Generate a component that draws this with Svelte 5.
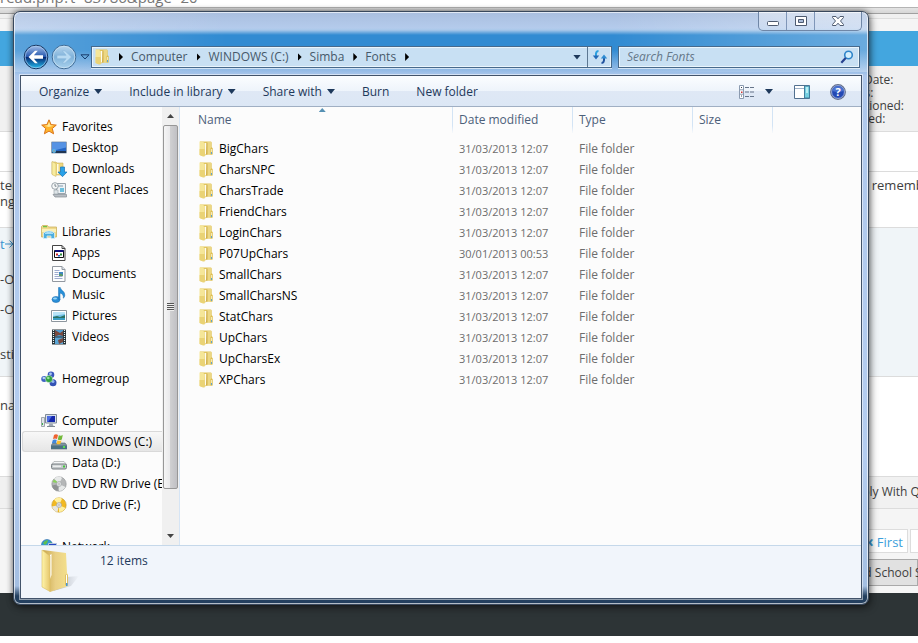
<script>
  const crumbs = ['Computer', 'WINDOWS (C:)', 'Simba', 'Fonts']

  const commands = [
    { label: 'Organize', menu: true },
    { label: 'Include in library', menu: true },
    { label: 'Share with', menu: true },
    { label: 'Burn', menu: false },
    { label: 'New folder', menu: false }
  ]

  const groups = [
    {
      label: 'Favorites',
      icon: 'star',
      items: [
        { label: 'Desktop', icon: 'desktop' },
        { label: 'Downloads', icon: 'downloads' },
        { label: 'Recent Places', icon: 'recent' }
      ]
    },
    {
      label: 'Libraries',
      icon: 'libraries',
      items: [
        { label: 'Apps', icon: 'apps' },
        { label: 'Documents', icon: 'documents' },
        { label: 'Music', icon: 'music' },
        { label: 'Pictures', icon: 'pictures' },
        { label: 'Videos', icon: 'videos' }
      ]
    },
    { label: 'Homegroup', icon: 'homegroup', items: [] },
    {
      label: 'Computer',
      icon: 'computer',
      items: [
        { label: 'WINDOWS (C:)', icon: 'windrive' },
        { label: 'Data (D:)', icon: 'drive' },
        { label: 'DVD RW Drive (E:)', icon: 'dvd' },
        { label: 'CD Drive (F:)', icon: 'cd' }
      ]
    },
    { label: 'Network', icon: 'network', items: [] }
  ]

  const columns = ['Name', 'Date modified', 'Type', 'Size']

  const names = [
    'BigChars', 'CharsNPC', 'CharsTrade', 'FriendChars', 'LoginChars', 'P07UpChars',
    'SmallChars', 'SmallCharsNS', 'StatChars', 'UpChars', 'UpCharsEx', 'XPChars'
  ]
  const files = names.map((name) => ({
    name,
    modified: name === 'P07UpChars' ? '30/01/2013 00:53' : '31/03/2013 12:07',
    type: 'File folder'
  }))

  let selected = $state('WINDOWS (C:)')
  let query = $state('')
</script>

{#snippet icon(name)}
  <svg class="icon" viewBox="0 0 16 16" aria-hidden="true">
    {#if name === 'folder'}
      <path d="M2 .5h11l.7.7v4.800l.8 1v6.500H9L5 15.500 2 14z" fill="#e2c65f" />
      <path d="M9 1h4v12.500H8z" fill="#ecd783" />
      <path d="M6.500 2H8.500v10L7 14z" fill="#fffdf0" />
      <path d="M8.500 1.500h1v12h-1.500z" fill="#cfae4a" />
      <path d="M1.500 .5h3.500l1.500 2v13L1.500 14z" fill="#f5e698" />
      <path d="M1.500 8L6.500 8v7.500L1.500 14z" fill="#e6cb66" opacity=".7" />
      <path d="M12.500 7h2v6.500h-2z" fill="#ddbd51" />
      <path d="M13 8h.8v5H13z" fill="#fbf3cd" />
      <path d="M13 11h.9v2H13z" fill="#4f9bd0" />
    {:else if name === 'star'}
      <path d="M8 .8l2.100 4.800 5.200.5-4 3.400 1.300 5.300L8 12.100l-4.600 2.700 1.300-5.300-4-3.400 5.200-.5z" fill="#ffb52e" stroke="#d9741a" stroke-width="1" />
      <path d="M8 3l1.300 3.300 3.400.5-5 1.200-4.200-1.200 3.200-.5z" fill="#ffe99a" />
    {:else if name === 'desktop'}
      <path d="M.5 2h15v11H.5z" fill="#2465c4" stroke="#8fa0b4" />
      <path d="M1 2.500h14v5L1 11z" fill="#5592e4" />
      <path d="M1 11h14v2H1z" fill="#203552" />
      <circle cx="3" cy="11" r="2" fill="#53b5ea" />
      <path d="M2.500 10.500h1v1h-1z" fill="#f27d32" />
    {:else if name === 'downloads'}
      <path d="M1 1h4l1 1h6v12H3l-2-1z" fill="#eed77e" stroke="#cbb05a" stroke-width=".6" />
      <path d="M6 3h1.500v10H6z" fill="#fffbe5" />
      <path d="M1 .5l4 2v13l-4-2z" fill="#f8ec9f" stroke="#cbb05a" stroke-width=".5" />
      <path d="M9.500 6h4v5H16l-4.500 4.700L7 11h2.500z" fill="#29a1e8" stroke="#1772b4" stroke-width=".7" />
    {:else if name === 'recent'}
      <path d="M5.500 1.500h9v10h-9z" fill="#eef2f5" stroke="#9aa5ad" />
      <path d="M7 3h5v2H7z" fill="#b8c6d0" />
      <path d="M9 6h4v4H9z" fill="#6ec0de" />
      <path d="M2 12.500h13.500V15H4z" fill="#b8bec4" stroke="#858d94" stroke-width=".7" />
      <path d="M3 8h4v4H3z" fill="#dfe5e9" stroke="#949da4" stroke-width=".6" />
      <circle cx="4" cy="4" r="3.300" fill="#f6f8f9" stroke="#929ba2" stroke-width=".9" />
      <path d="M4 2v2.200h1.500" fill="none" stroke="#5f6c75" stroke-width=".8" />
    {:else if name === 'libraries'}
      <path d="M.5 2.500l1-1h5l1 1.500h8v10H.5z" fill="#f0d98a" stroke="#cbb15e" stroke-width=".8" />
      <path d="M2 2h4v1.200H2z" fill="#6cc644" />
      <path d="M1 5h14v3H1z" fill="#faf0b7" />
      <path d="M2.500 9q5.500-4 11 0v5.500h-3.500v-2.500H6v2.500H2.500z" fill="#4eaede" stroke="#d3effb" stroke-width=".8" />
      <path d="M4 9q4-2.500 8 0v1H4z" fill="#a9def6" />
    {:else if name === 'apps'}
      <path d="M1.500.5h9.500l3 3v12H1.500z" fill="#fff" stroke="#444" />
      <path d="M11 .5v3h3" fill="none" stroke="#444" />
      <path d="M3.500 5.500h9v7h-9z" fill="#fff" stroke="#111" />
      <path d="M4 5h8.500v2H4z" fill="#10107a" />
      <path d="M5 8.500h2v2H5z" fill="#c22" />
      <path d="M7 10h2v1.500H7z" fill="#26c" />
      <path d="M9 8.500h2v2H9z" fill="#2a8a38" />
    {:else if name === 'documents'}
      <path d="M1.500.5h9.500l3 3v12H1.500z" fill="#fdfeff" stroke="#9298a0" />
      <path d="M11 .5v3h3" fill="#dde3ea" stroke="#9298a0" />
      <path d="M3.500 4.500h5m-5 2h4m-4 2h4m-4 2h8m-8 2h8" stroke="#9eaccf" />
      <path d="M8 6h4v4H8z" fill="#3d83c4" />
      <path d="M8 8.500l2-1 2 1.500v1H8z" fill="#5b9a66" />
    {:else if name === 'music'}
      <ellipse cx="5" cy="12.500" rx="4" ry="3" fill="#2b8fd8" stroke="#1b6fb2" stroke-width=".6" />
      <path d="M7.500.5h1.800c.2 3 4.500 3.400 4.500 7.500 0 1.500-.6 2.500-1.500 3.200.5-3-1-4.500-3.300-5.200V12.500H7.500z" fill="#2790d8" stroke="#1b6fb2" stroke-width=".5" />
      <ellipse cx="4" cy="11.500" rx="2" ry="1" fill="#9ad6f6" />
    {:else if name === 'pictures'}
      <path d="M.5 2.500h15v11H.5z" fill="#fff" stroke="#8d969e" />
      <path d="M2 4h12v8H2z" fill="#74c2e8" />
      <path d="M2 4h12v2L2 8z" fill="#b9e4f7" />
      <path d="M2 9l4-1 3 1 5-2v3H2z" fill="#2a7265" />
      <path d="M2 10h12v2H2z" fill="#3a9ec4" />
    {:else if name === 'videos'}
      <path d="M1 .5h14v15H1z" fill="#263238" />
      <path d="M4 1h8v6.500H4z" fill="#4f9dd2" />
      <path d="M4 8.500h8V15H4z" fill="#5aa6d6" />
      <path d="M4 1l5 3 3-2v5l-4-1-4 1.500zM7 11l5-2v4l-4 2z" fill="#7a4a3f" />
      <path d="M2.500 1v14M13.500 1v14" stroke="#e8f4f4" stroke-width="1.200" stroke-dasharray="1 1" />
    {:else if name === 'homegroup'}
      <circle cx="10" cy="3.800" r="3.300" fill="#3856bd" />
      <circle cx="3.200" cy="8" r="3" fill="#4064c4" />
      <circle cx="12" cy="11.800" r="3.500" fill="#3352b4" />
      <circle cx="9.500" cy="2.800" r="1.400" fill="#a7c5f2" />
      <circle cx="2.800" cy="7" r="1.300" fill="#b8d3f6" />
      <circle cx="12" cy="10.500" r="1.500" fill="#8db3ec" />
      <circle cx="8" cy="8" r="3.600" fill="#2fa242" stroke="#e4f4e6" stroke-width=".5" />
      <circle cx="7.300" cy="7" r="1.300" fill="#9be49a" />
    {:else if name === 'computer'}
      <path d="M.5 4.500h3v9h-3z" fill="#dfe4e8" stroke="#8b949c" stroke-width=".8" />
      <path d="M1 10h1v2H1z" fill="#3bb34a" />
      <path d="M4.500 1.500h11v8.500h-11z" fill="#d7dfe9" stroke="#7f8a98" />
      <path d="M6 3h8v6H6z" fill="#1528ad" />
      <path d="M6 3h5L7 9H6z" fill="#4c6ce2" />
      <path d="M8.500 10.500h3l1 2.500h-5z" fill="#9ea8b2" />
      <path d="M6 13h8v1H6z" fill="#7e8892" />
    {:else if name === 'windrive'}
      <path d="M2 9h12l2 2.500v3.500H0v-3.500z" fill="#7f939e" stroke="#53656f" stroke-width=".6" />
      <path d="M0 11.500h16V15H0z" fill="#4b7182" />
      <path d="M12 12h2v2h-2z" fill="#54df4e" />
      <path d="M3 1q2-1.500 4 0L6 5Q4 4 2 5z" fill="#ee6230" />
      <path d="M7.800 1.300q2 1 4-.2l-1 4.300q-2 1-4 0z" fill="#73b93a" />
      <path d="M1.800 6q2-1.200 4 0l-1 3.500q-2-1-4 0z" fill="#3f88dc" />
      <path d="M6.500 6.300q2 1 4 0l-1 3.500q-2 1-4 0z" fill="#fabf2d" />
    {:else if name === 'drive'}
      <path d="M3 6.500h10L16 10H0z" fill="#f3f5f6" stroke="#a5a9ab" stroke-width=".7" />
      <rect x=".5" y="9" width="15" height="5" rx="1.500" fill="#c3c8ca" stroke="#777d80" />
      <path d="M2 10.500h8V12H2z" fill="#eceeee" />
      <path d="M12 10.500h2v2h-2z" fill="#42c53c" />
    {:else if name === 'dvd' || name === 'cd'}
      <circle cx="8" cy="8" r="7.200" fill={name === 'cd' ? '#f2b921' : '#b5b7b8'} stroke={name === 'cd' ? '#c09a30' : '#8b8e90'} stroke-width=".6" />
      <path d="M8 8L3 2.500Q8-1 11 2zM8 8l6.500 3Q12 15 8 15z" fill={name === 'cd' ? '#fff0a0' : '#e7e9e9'} />
      <path d="M8 8L1 9.500Q2 14 6.500 15z" fill={name === 'cd' ? '#e7e6df' : '#8f9293'} />
      {#if name === 'dvd'}
        <path d="M1.500 6l4 1 .5-1.500-3-2z" fill="#8bd35b" />
      {/if}
      <circle cx="8" cy="8" r="2.500" fill="#e9ebec" stroke="#94989b" stroke-width=".6" />
      <circle cx="8" cy="8" r="1" fill="#fff" stroke="#888" stroke-width=".5" />
    {:else if name === 'network'}
      <circle cx="6" cy="6" r="5.500" fill="#3597d8" stroke="#2767a4" stroke-width=".6" />
      <path d="M2 4q2-3 5-3 0 3-3 5zM7 5l3-2 1 3-2 3z" fill="#5fc04c" />
      <path d="M7.500 4.500h8v6h-8z" fill="#2749c1" stroke="#b9c8de" />
    {/if}
  </svg>
{/snippet}

<div class="desktop">
  <div class="forum" aria-hidden="true">
    <div class="url">read.php?t=83786&amp;page=20</div>
    <div class="tabs"></div>
    <div class="strip"></div>
    <div class="banner"></div>
    <div class="band user">
      <div></div>
      <div class="side stats">
        <span>Join Date:</span><span>Posts:</span><span>Mentioned:</span><span>Quoted:</span>
      </div>
    </div>
    <div class="band blank"></div>
    <div class="band post">
      <div>ter<br />nge</div>
      <div class="side">dont remember</div>
    </div>
    <div class="band quote">
      <div class="lines">
        <span class="link">
          t<svg width="9" height="8" viewBox="0 0 9 8"><path d="M0 4h8M4.500.5L8 4 4.500 7.500" fill="none" stroke="currentColor" /></svg>
        </span>
        <span>-OS</span><span>-OS</span><span class="last">stin</span>
      </div>
    </div>
    <div class="band reply"><div>nar</div></div>
    <div class="band actions"><div></div><div class="side">Reply With Q</div></div>
    <div class="band paging">
      <div></div>
      <div class="side">
        <div class="pages"><span class="page"><b>«</b> First</span><span class="page"></span></div>
        <div class="jump">Old School S</div>
      </div>
    </div>
    <div class="footer"></div>
  </div>

  <main class="window">
    <header class="titlebar">
      <div class="caption">
        <button aria-label="Minimize">
          <svg width="14" height="12" viewBox="0 0 14 12"><rect x="1.500" y="6.500" width="11" height="4" rx="1" fill="#fff" stroke="#4e5b70" /></svg>
        </button>
        <button aria-label="Maximize">
          <svg width="14" height="12" viewBox="0 0 14 12"><path d="M1.500 1.500h11v9h-11z" fill="#fff" stroke="#4e5b70" /><path d="M4.500 4.500h5v3h-5z" fill="#a9bbd8" stroke="#4e5b70" /></svg>
        </button>
        <button class="close" aria-label="Close">
          <svg width="14" height="12" viewBox="0 0 14 12"><path d="M1.500 1.500h3.500l2 2.300 2-2.300h3.500v1L9.500 6l3 3.500v1H9L7 8.200 5 10.500H1.500v-1l3-3.500-3-3.500z" fill="#fff" stroke="#4e5b70" /></svg>
        </button>
      </div>
    </header>

    <div class="navbar">
      <div class="travel">
        <button aria-label="Back">
          <svg width="26" height="26" viewBox="0 0 26 26">
            <defs>
              <linearGradient id="back" x2="0" y2="1">
                <stop offset="0" stop-color="#a8c3ec" /><stop offset=".48" stop-color="#2758ae" />
                <stop offset=".5" stop-color="#04236f" /><stop offset="1" stop-color="#25c2f2" />
              </linearGradient>
              <linearGradient id="forward" x2="0" y2="1">
                <stop offset="0" stop-color="#b9d6ee" /><stop offset=".5" stop-color="#7fb2da" /><stop offset="1" stop-color="#aad2ed" />
              </linearGradient>
            </defs>
            <circle cx="13" cy="13" r="11.800" fill="url(#back)" stroke="#16345f" />
            <circle cx="13" cy="13" r="10.800" fill="none" stroke="#a9cbee" stroke-opacity=".7" />
            <path d="M5.500 13L12 6.800h2.800L10.900 11.300H20v3.400h-9.100l3.900 4.500H12z" fill="#fff" />
          </svg>
        </button>
        <button aria-label="Forward">
          <svg width="26" height="26" viewBox="0 0 26 26">
            <circle cx="13" cy="13" r="11.800" fill="url(#forward)" stroke="#3f6a94" />
            <circle cx="13" cy="13" r="10.800" fill="none" stroke="#d2e7f7" stroke-opacity=".7" />
            <path d="M20.500 13L14 6.800h-2.800l3.900 4.500H6v3.400h9.100l-3.900 4.500H14z" fill="#b8daf2" stroke="#88b6da" stroke-width=".6" />
          </svg>
        </button>
        <button class="recent" aria-label="Recent pages">
          <svg width="10" height="6" viewBox="0 0 10 6"><path d="M1 .8h8L5 5z" fill="#68aadd" stroke="#173d6d" /></svg>
        </button>
      </div>

      <nav class="address" aria-label="Address">
        {@render icon('folder')}
        {#each crumbs as crumb}
          <i class="arrow"></i>
          <button class="crumb">{crumb}</button>
        {/each}
        <i class="arrow"></i>
        <button class="drop" aria-label="Previous locations"><i class="caret"></i></button>
        <button class="refresh" aria-label="Refresh">
          <svg width="16" height="16" viewBox="0 0 16 16">
            <path d="M6.500 2Q3.500 2 4 7" fill="none" stroke="#2aa0df" stroke-width="2" />
            <path d="M.8 6.500h6.400L4 10.500z" fill="#2368b6" />
            <path d="M9.500 14q3 0 2.500-5" fill="none" stroke="#21539f" stroke-width="2" />
            <path d="M8.800 9.500h6.400L12 5.500z" fill="#2e8bd2" />
          </svg>
        </button>
      </nav>

      <label class="search">
        <input type="text" placeholder="Search Fonts" aria-label="Search Fonts" bind:value={query} />
        <svg width="14" height="14" viewBox="0 0 14 14">
          <circle cx="8.500" cy="5" r="3.800" fill="#d5effc" stroke="#2e84c9" stroke-width="1.600" />
          <path d="M5.700 8L1.300 12.700" stroke="#27428f" stroke-width="2.200" />
        </svg>
      </label>
    </div>

    <div class="client">
      <div class="toolbar">
        {#each commands as command}
          <button class="command">
            {command.label}
            {#if command.menu}<i class="caret"></i>{/if}
          </button>
        {/each}
        <div class="tools">
          <button class="view" aria-label="Change your view">
            <svg width="16" height="14" viewBox="0 0 16 14">
              <path d="M.5.500h4v13h-4zM.5 4.800h4M.5 9.200h4" fill="#fff" stroke="#8b9bb0" />
              <path d="M2 2h1v1H2zM2 10.500h1v1H2z" fill="#345" />
              <path d="M2 6.500h1.500V8H2z" fill="#c33" />
              <path d="M6 2.500h4m1 0h4M6 7h4m1 0h4M6 11.500h4m1 0h4" stroke="#66758a" />
            </svg>
            <i class="caret"></i>
          </button>
          <button aria-label="Show the preview pane">
            <svg width="16" height="14" viewBox="0 0 16 14">
              <path d="M.5.500h15v13H.5z" fill="#fff" stroke="#52708f" />
              <path d="M1 3.500h9" stroke="#9fb2c7" />
              <path d="M10.500 1h5v12h-5z" fill="#76cfe0" stroke="#407f9e" />
              <path d="M12 2h2v6h-2z" fill="#b9eef4" />
            </svg>
          </button>
          <button aria-label="Get help">
            <svg width="16" height="16" viewBox="0 0 16 16">
              <circle cx="8" cy="8" r="7.300" fill="#2449b4" stroke="#66718c" stroke-width="1.200" />
              <circle cx="8" cy="8" r="6.400" fill="none" stroke="#c7d4ee" stroke-width=".7" />
              <path d="M2.500 7Q3 2.500 8 2.300 13 2.500 13.500 7 8 9 2.500 7z" fill="#4a72d0" />
              <text class="mark" x="8" y="12" text-anchor="middle">?</text>
            </svg>
          </button>
        </div>
      </div>

      <div class="panes">
        <nav class="tree" aria-label="Folders">
          {#each groups as group}
            <ul>
              <li><a class="node" href="#top">{@render icon(group.icon)}{group.label}</a></li>
              {#each group.items as item}
                <li>
                  <a class="node child" class:selected={selected === item.label} href="#top" onclick={() => (selected = item.label)}>
                    {@render icon(item.icon)}{item.label}
                  </a>
                </li>
              {/each}
            </ul>
          {/each}
        </nav>
        <div class="scrollbar">
          <i class="step up"></i>
          <div class="thumb"><i class="grip"></i></div>
          <i class="step down"></i>
        </div>

        <div class="list">
          <table>
            <colgroup>
              <col class="wide" /><col class="mid" /><col class="mid" /><col class="narrow" /><col />
            </colgroup>
            <thead>
              <tr>
                {#each columns as column, i}
                  <th scope="col">
                    {#if i === 0}<i class="sort"></i>{/if}
                    {column}
                  </th>
                {/each}
                <td></td>
              </tr>
            </thead>
            <tbody>
              {#each files as file (file.name)}
                <tr>
                  <td class="name"><span>{@render icon('folder')}{file.name}</span></td>
                  <td class="date">{file.modified}</td>
                  <td>{file.type}</td>
                  <td></td>
                  <td></td>
                </tr>
              {/each}
            </tbody>
          </table>
        </div>
      </div>

      <footer class="details">
        <svg width="40" height="44" viewBox="0 0 40 44" aria-hidden="true">
          <defs>
            <linearGradient id="flap" x2="1" y2="0">
              <stop offset="0" stop-color="#fff5ab" /><stop offset="1" stop-color="#e6c66b" />
            </linearGradient>
            <linearGradient id="inside">
              <stop offset="0" stop-color="#c9a64b" /><stop offset=".5" stop-color="#e9d086" /><stop offset="1" stop-color="#f4e08c" />
            </linearGradient>
            <linearGradient id="shade">
              <stop offset="0" stop-color="#7d828c" stop-opacity=".6" /><stop offset="1" stop-color="#7d828c" stop-opacity="0" />
            </linearGradient>
          </defs>
          <path d="M26 28l13-1-8 10-18 5z" fill="url(#shade)" />
          <path d="M3 1l23 3 1 20 1 2v11l-18 6z" fill="url(#inside)" />
          <path d="M10 6l1.500-1v21L10 30z" fill="#fff" />
          <path d="M2 1l8 6v35.500L2 38z" fill="url(#flap)" stroke="#d9bc60" stroke-width=".6" />
          <path d="M25.500 26q1-2 2 0v10q-1 2-2 0z" fill="#fff" stroke="#dfc162" />
          <path d="M26 34h1.500v3H26z" fill="#4295dd" />
        </svg>
        <span>12 items</span>
      </footer>
    </div>
  </main>
</div>

<style>
  :global(body) {
    background: #fff;
  }

  .desktop {
    position: relative;
    height: 100vh;
    min-height: 480px;
    overflow: hidden;
    font-family: "Open Sans", "Noto Sans", sans-serif;
    font-size: 12px;
    line-height: 16px;
    color: #000;
  }

  button {
    display: flex;
    align-items: center;
    justify-content: center;
    padding: 0;
    border: none;
    background: none;
    color: inherit;
    font: inherit;
    white-space: nowrap;
  }

  svg {
    display: block;
    flex: none;
  }

  .icon {
    width: 16px;
    height: 16px;
  }

  /* forum page behind the window */
  .forum {
    height: calc(100% - 7px);
    display: flex;
    flex-direction: column;
    color: #3e3e3e;
    font-size: 13px;
  }

  .url {
    height: 7px;
    display: flex;
    align-items: flex-end;
    overflow: hidden;
    font-size: 15px;
    line-height: 20px;
    color: #777;
  }

  .tabs {
    height: 5px;
    border-top: 1px solid #b4b4b4;
    border-bottom: 1px solid #a0a0a0;
    background: linear-gradient(#e4e4e4, #d6d6d6);
  }

  .strip {
    height: 17px;
    background: linear-gradient(#f0f0f0 4px, #dedede 4px, #dedede 5px, #f5f5f5 5px);
  }

  .banner {
    height: 35px;
    background: #43a6df;
  }

  .band {
    box-sizing: border-box;
    display: flex;
    justify-content: space-between;
    border-bottom: 1px solid #dcdcdc;
    background: #fff;
    white-space: nowrap;
    overflow: hidden;
  }

  .side {
    box-sizing: border-box;
    width: 78px;
  }

  .user {
    height: 66px;
    padding-top: 7px;
    background: #f1f1f1;
  }

  .stats {
    display: grid;
    align-content: start;
    font-size: 12px;
    line-height: 13px;
  }

  .blank {
    height: 40px;
  }

  .post {
    height: 56px;
    padding-top: 5px;
  }

  .quote {
    height: 149px;
    background: #f0f5f8;
  }

  .lines {
    display: grid;
    align-content: start;
    gap: 14px;
    padding-top: 8px;
  }

  .link {
    display: flex;
    align-items: center;
    padding-bottom: 5px;
    color: #3a93cf;
  }

  .last {
    padding-top: 15px;
  }

  .reply {
    height: 100px;
    padding-top: 20px;
  }

  .actions {
    height: 32px;
    padding-top: 7px;
    background: #f1f1f1;
    font-size: 12px;
  }

  .actions .side {
    padding-left: 8px;
  }

  .paging {
    flex: 1;
    padding-top: 20px;
    border-bottom: none;
    background: #f5f5f5;
    font-size: 12px;
  }

  .pages {
    display: flex;
    gap: 2px;
  }

  .page {
    box-sizing: border-box;
    width: 68px;
    height: 24px;
    flex: none;
    padding: 3px 4px 3px 0;
    border: 1px solid #ddd;
    background: #fff;
    color: #3d9fdb;
    text-align: right;
    font-size: 13px;
  }

  .page b {
    font-size: 16px;
  }

  .jump {
    margin-top: 6px;
    padding: 5px 0 4px 11px;
    border: 1px solid #a9a9a9;
    background: #e1e1e1;
  }

  .footer {
    height: 43px;
    background: #2d3436;
  }

  /* window frame */
  .window {
    position: absolute;
    inset: 11px 49px 38px 13px;
    box-sizing: border-box;
    display: flex;
    flex-direction: column;
    padding: 0 6px 5px;
    border: 1px solid #39485c;
    border-radius: 7px;
    background:
      linear-gradient(90deg, rgba(255, 255, 255, .2), transparent 25%, transparent 70%, rgba(255, 255, 255, .28)) 0 0 / 100% 60px no-repeat,
      linear-gradient(#a9bede, #b4cbec 16px, #a9c8ea 18px, #318bd2 23px, #318bd2 38px, #93bbe6 58px, #afc8ec 64px, #b4cdf0 75%, #a4bfe2 calc(100% - 18px), #24405f calc(100% - 8px));
    box-shadow: inset 0 0 0 1px rgba(255, 255, 255, .65), 0 0 6px rgba(0, 0, 0, .55), 2px 3px 8px rgba(0, 0, 0, .3);
  }

  .titlebar {
    display: flex;
    justify-content: flex-end;
    height: 32px;
  }

  .caption {
    display: flex;
    height: 19px;
    border: 1px solid #6f86a6;
    border-top: none;
    border-radius: 0 0 5px 5px;
    background: linear-gradient(rgba(255, 255, 255, .4), rgba(255, 255, 255, .15));
    box-sizing: border-box;
  }

  .caption button {
    width: 28px;
    border-right: 1px solid #7f96b8;
  }

  .caption .close {
    width: 46px;
    border-right: none;
  }

  .navbar {
    display: flex;
    align-items: center;
    height: 26px;
    margin-bottom: 5px;
    color: #46596a;
  }

  .travel {
    display: flex;
    align-items: center;
    gap: 2px;
    padding: 0 0 0 3px;
  }

  .recent {
    width: 12px;
    height: 20px;
  }

  .address,
  .search {
    box-sizing: border-box;
    display: flex;
    align-items: center;
    height: 22px;
    border: 1px solid #476a8c;
    box-shadow: inset 0 0 0 1px #eaf5fc, 0 1px 0 rgba(255, 255, 255, .6);
    background: #c8e0f3;
  }

  .address {
    flex: 1;
    padding-left: 2px;
  }

  .arrow {
    width: 4px;
    height: 8px;
    margin: 0 8px 0 9px;
    background: #000;
    clip-path: polygon(0 0, 100% 50%, 0 100%);
  }

  .caret {
    width: 8px;
    height: 5px;
    background: #1e395b;
    clip-path: polygon(0 0, 100% 0, 50% 100%);
  }

  .drop {
    width: 20px;
    height: 20px;
    margin-left: auto;
  }

  .refresh {
    width: 24px;
    height: 20px;
    border-left: 1px solid #5d7892;
  }

  .search {
    width: 242px;
    margin: 0 2px 0 6px;
    padding: 0 5px 0 8px;
  }

  .search input {
    flex: 1;
    min-width: 0;
    padding: 0;
    border: none;
    outline: none;
    background: none;
    font: inherit;
    color: #333;
  }

  .search input::placeholder {
    color: #66788a;
    font-style: italic;
    opacity: 1;
  }

  .client {
    flex: 1;
    min-height: 0;
    display: flex;
    flex-direction: column;
    border: 1px solid #42536a;
    background: #fcfcfc;
    box-shadow: 0 0 0 1px rgba(255, 255, 255, .5);
  }

  .toolbar {
    flex: none;
    box-sizing: border-box;
    display: flex;
    align-items: center;
    gap: 27px;
    height: 31px;
    padding: 1px 15px 0 18px;
    border-bottom: 1px solid #a0afc3;
    background: linear-gradient(#fbfdff, #eef4fb 50%, #dfe8f5 50%, #dce7f5);
    color: #1e395b;
  }

  .command {
    gap: 5px;
  }

  .tools {
    display: flex;
    align-items: center;
    gap: 20px;
    margin-left: auto;
  }

  .view {
    gap: 10px;
    margin-right: 1px;
  }

  .mark {
    fill: #fff;
    font-size: 11px;
    font-weight: 700;
  }

  .panes {
    flex: 1;
    min-height: 0;
    display: flex;
  }

  .tree {
    box-sizing: border-box;
    width: 141px;
    flex: none;
    padding-top: 9px;
    overflow: hidden;
  }

  .tree ul {
    margin: 0 0 21px;
    padding: 0 0 0 1px;
    list-style: none;
  }

  .node {
    box-sizing: border-box;
    display: flex;
    align-items: center;
    gap: 5px;
    height: 21px;
    padding-left: 18px;
    border: 1px solid transparent;
    border-right: none;
    border-radius: 3px 0 0 3px;
    color: #000;
    text-decoration: none;
    white-space: nowrap;
    overflow: hidden;
  }

  .child {
    padding-left: 28px;
  }

  .selected {
    border-color: #d9d9d9;
    background: linear-gradient(#f8f8f8, #e6e6e6);
  }

  .scrollbar {
    box-sizing: border-box;
    width: 18px;
    flex: none;
    display: flex;
    flex-direction: column;
    align-items: center;
    border-right: 1px solid #d6e5f5;
    background: #f0f0f0;
  }

  .step {
    width: 7px;
    height: 4px;
    margin: 7px 0;
    background: #444;
    clip-path: polygon(0 100%, 50% 0, 100% 100%);
  }

  .down {
    margin-top: auto;
    clip-path: polygon(0 0, 100% 0, 50% 100%);
  }

  .thumb {
    box-sizing: border-box;
    width: 15px;
    height: 83%;
    display: flex;
    align-items: center;
    justify-content: center;
    border: 1px solid #979797;
    border-radius: 2px;
    background: linear-gradient(90deg, #f5f5f5, #e9e9eb 45%, #cfcfd1 50%, #c0c0c4);
  }

  .grip {
    width: 7px;
    height: 8px;
    background: repeating-linear-gradient(#555 0 1px, #eee 1px 2px);
  }

  .list {
    flex: 1;
    min-width: 0;
    overflow: hidden;
  }

  table {
    width: 100%;
    table-layout: fixed;
    border-collapse: separate;
    border-spacing: 0;
  }

  .wide {
    width: 273px;
  }

  .mid {
    width: 120px;
  }

  .narrow {
    width: 80px;
  }

  th {
    position: relative;
    height: 26px;
    padding: 0 0 0 6px;
    border-right: 1px solid;
    border-image: linear-gradient(#d3e4f5 70%, transparent) 1;
    color: #4c607a;
    font-weight: 400;
    text-align: left;
  }

  th:first-child {
    padding-left: 18px;
  }

  .sort {
    position: absolute;
    top: 1px;
    left: 51%;
    width: 7px;
    height: 4px;
    background: #5691b4;
    clip-path: polygon(0 100%, 50% 0, 100% 100%);
  }

  tbody::before {
    content: "";
    display: block;
    height: 5px;
  }

  td {
    height: 21px;
    padding: 0 0 0 6px;
    color: #6d6d6d;
    white-space: nowrap;
  }

  td.name {
    padding-left: 18px;
    color: #000;
  }

  td.date {
    font-size: 11px;
  }

  .name span {
    display: flex;
    align-items: center;
    gap: 5px;
  }

  .details {
    flex: none;
    box-sizing: border-box;
    display: flex;
    gap: 20px;
    height: 53px;
    padding: 3px 19px;
    border-top: 1px solid #c5d8ea;
    background: #f1f5fb;
    color: #1e395b;
  }

  .details span {
    padding-top: 4px;
  }
</style>
